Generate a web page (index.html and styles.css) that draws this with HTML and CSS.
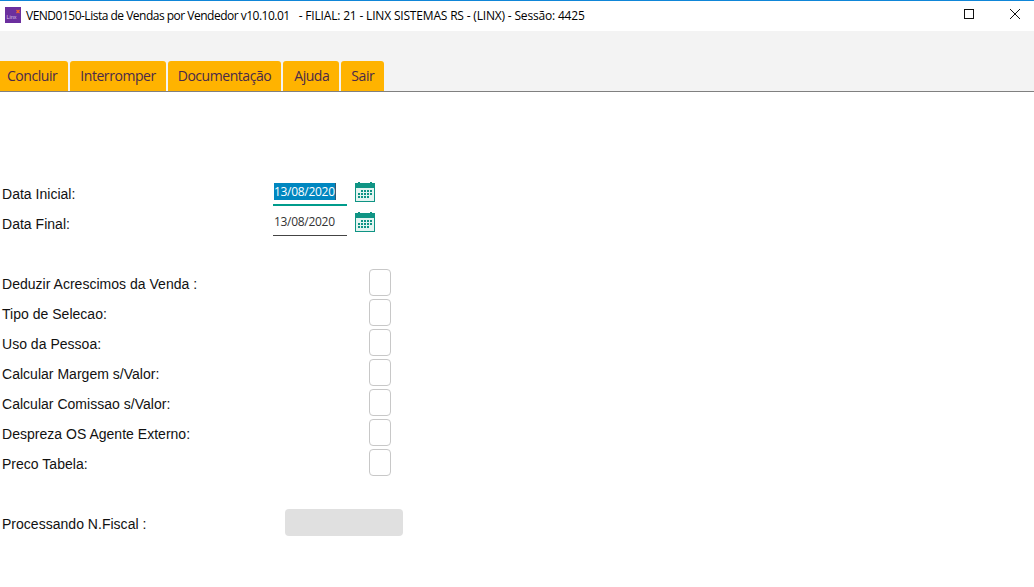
FILE: index.html
```html
<!DOCTYPE html>
<html lang="pt">
<head>
<meta charset="utf-8">
<title>VEND0150</title>
<link rel="stylesheet" href="styles.css">
</head>
<body>
<header class="titlebar">
  <svg class="logo" width="16" height="16" viewBox="0 0 16 16"><rect width="16" height="16" fill="#6b2f9e"/><text x="1.500" y="11.500" class="logo-text">Linx</text><path d="M11.500 3l3 3M14.500 3l-3 3" stroke="#f4662a" stroke-width="1.200"/></svg>
  <span class="title"><span class="title-main">VEND0150-Lista de Vendas por Vendedor v10.10.01</span><span class="title-info">- FILIAL: 21 - LINX SISTEMAS RS - (LINX) - Sessão: 4425</span></span>
  <div class="winbtns">
    <svg class="winbtn" width="46" height="30" viewBox="0 0 46 30"><rect x="22.500" y="9.500" width="9" height="9" fill="none" stroke="#111" stroke-width="1"/></svg>
    <svg class="winbtn" width="46" height="30" viewBox="0 0 46 30"><path d="M22 9l10 10M32 9L22 19" stroke="#111" stroke-width="1" fill="none"/></svg>
  </div>
</header>
<nav class="toolbar">
  <button class="tab tab-first">Concluir</button>
  <button class="tab">Interromper</button>
  <button class="tab">Documentação</button>
  <button class="tab tab-roomy">Ajuda</button>
  <button class="tab">Sair</button>
</nav>
<main class="form">
  <div class="row">
    <label class="label label-date">Data Inicial:</label>
    <div class="date date-active"><span class="selected">13/08/2020</span></div>
    <svg class="cal" width="20" height="20" viewBox="0 0 20 20"><use href="#calendar"/></svg>
  </div>
  <div class="row">
    <label class="label label-date">Data Final:</label>
    <div class="date">13/08/2020</div>
    <svg class="cal" width="20" height="20" viewBox="0 0 20 20"><use href="#calendar"/></svg>
  </div>
  <div class="row"></div>
  <div class="row"><label class="label label-check">Deduzir Acrescimos da Venda :</label><span class="check"></span></div>
  <div class="row"><label class="label label-check">Tipo de Selecao:</label><span class="check"></span></div>
  <div class="row"><label class="label label-check">Uso da Pessoa:</label><span class="check"></span></div>
  <div class="row"><label class="label label-check">Calcular Margem s/Valor:</label><span class="check"></span></div>
  <div class="row"><label class="label label-check">Calcular Comissao s/Valor:</label><span class="check"></span></div>
  <div class="row"><label class="label label-check">Despreza OS Agente Externo:</label><span class="check"></span></div>
  <div class="row"><label class="label label-check">Preco Tabela:</label><span class="check"></span></div>
  <div class="row"></div>
  <div class="row"><label class="label label-proc">Processando N.Fiscal :</label><span class="disabled-field"></span></div>
</main>
<svg class="defs" width="0" height="0">
  <defs>
    <g id="calendar">
      <path d="M0 1h3V0h2v1h10V0h2v1h3v19H0z" fill="#0f9484"/>
      <rect x="1" y="6" width="18" height="13" fill="#e4f4f1"/>
      <path d="M6 8h2v2H6zM9 8h2v2H9zM12 8h2v2h-2zM15 8h2v2h-2zM3 11h2v2H3zM6 11h2v2H6zM9 11h2v2H9zM12 11h2v2h-2zM15 11h2v2h-2zM3 14h2v2H3zM6 14h2v2H6zM9 14h2v2H9zM12 14h2v2h-2z" fill="#0f9484"/>
    </g>
  </defs>
</svg>
</body>
</html>
```
FILE: styles.css
```css
* { box-sizing: border-box; }
html, body { margin: 0; padding: 0; background: #fff; overflow: hidden; }
body { width: 1034px; height: 587px; font-family: "Open Sans", "Noto Sans", sans-serif; }

.titlebar {
  display: flex;
  align-items: center;
  height: 31px;
  border-top: 1px solid #0f86d8;
  padding: 0 0 2px 5px;
  background: #fff;
}
.logo { flex: none; margin-right: 5px; }
.logo-text { font-family: "Liberation Sans", sans-serif; font-size: 5.500px; fill: #d8c4e8; }
.title { font-size: 12px; color: #000; white-space: nowrap; }
.title-main { letter-spacing: -0.5px; margin-right: 9px; }
.title-info { letter-spacing: -0.18px; }
.winbtns { display: flex; margin-left: auto; }
.winbtn { display: block; }

.toolbar {
  display: flex;
  align-items: flex-end;
  gap: 2px;
  height: 61px;
  padding-left: 0;
  background: #f3f3f3;
  border-bottom: 1px solid #808080;
}
.tab {
  height: 30px;
  padding: 0 10px 2px;
  border: 0;
  border-radius: 3px 3px 0 0;
  background: #ffb300;
  color: #4a2a4a;
  font-family: "Open Sans", "Noto Sans", sans-serif;
  font-size: 14px;
  letter-spacing: -0.45px;
}
.tab-first { margin-left: -3px; padding-right: 11px; }
.tab-roomy { padding-left: 11px; }

.form { padding-top: 86px; }
.row { display: flex; align-items: center; height: 30px; }
.label {
  flex: none;
  padding-left: 2px;
  padding-top: 1px;
  font-family: "Liberation Sans", Arial, sans-serif;
  font-size: 14px;
  letter-spacing: 0.02px;
  color: #111;
}
.label-date { width: 273px; }
.label-check { width: 369px; }
.label-proc { width: 285px; }

.date {
  width: 74px;
  height: 28px;
  margin-bottom: 2px;
  padding: 5px 0 0 1px;
  border-bottom: 1px solid #444;
  font-size: 12px;
  line-height: 17px;
  letter-spacing: -0.3px;
  color: #333;
}
.date-active { border-bottom: 2px solid #009c8c; }
.selected { display: inline-block; height: 17px; background: #0087c0; color: #fff; border-right: 1px solid #33566e; }
.cal { flex: none; margin-left: 8px; margin-bottom: 2px; }

.check {
  width: 22px;
  height: 27px;
  margin-top: -1px;
  border: 1px solid #c8c8c8;
  border-radius: 4px;
  background: #fff;
}
.disabled-field {
  width: 118px;
  height: 27px;
  margin-top: -1px;
  border-radius: 4px;
  background: #e0e0e0;
}
.defs { position: absolute; }
```
